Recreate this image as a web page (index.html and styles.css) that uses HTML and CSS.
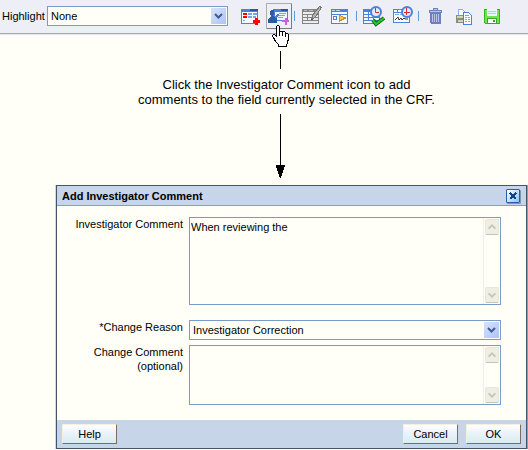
FILE: index.html
```html
<!DOCTYPE html>
<html lang="en">
<head>
    <meta charset="UTF-8">
    <meta name="viewport" content="width=device-width, initial-scale=1.0">
    <title>Add Investigator Comment</title>
    <link rel="stylesheet" href="styles.css">
</head>
<body>
    <div class="toolbar">
        <label for="highlight">Highlight</label>
        <div class="select-box highlight-box">
            <select id="highlight">
                <option>None</option>
            </select>
            <svg class="select-arrow" viewBox="0 0 15 16"><path d="M4 6l3.500 3.500L11 6"/></svg>
        </div>

        <button class="tool" type="button" aria-label="Add entry">
            <svg viewBox="0 0 26 26">
                <path fill="#4a82da" d="M3 6h17v15H3z"/>
                <path fill="#2456ad" d="M12 6h8v2h-8z"/>
                <path fill="#f4f9ff" d="M4 9h15v11H4z"/>
                <path fill="#f00" d="M5 10h4v2H5zM5 13h4v2H5z"/>
                <path fill="#79a5e8" d="M10 10h4v2h-4zM15 10h4v2h-4zM10 13h4v2h-4zM15 13h3v2h-3zM5 17h2v1H5z"/>
                <path fill="#f00" d="M17 15h3v2h2v3h-2v2h-3v-2h-2v-3h2z"/>
            </svg>
        </button>
        <button class="tool active" type="button" aria-label="Investigator Comment">
            <svg viewBox="0 0 26 26">
                <path fill="#4a82da" d="M7 6h15v12H7z"/>
                <path fill="#2456ad" d="M15 6h7v2h-7z"/>
                <path fill="#eef5ff" d="M9 9h12v8H9z"/>
                <path fill="#79a5e8" d="M13 10h7v1h-7zM12 12h7v1h-7zM12 14h5v1h-5z"/>
                <path fill="#2c5c9e" d="M4 8l1-1h2l1 1v3l-1 2 4 2v5H2v-4l3-3-1-2z"/>
                <path fill="#4a82c8" d="M8 14l4-3 1 1-3 4z"/>
                <path fill="#c65fe0" d="M19 15h2v2h2v2h-2v3h-2v-3h-3v-2h3z"/>
            </svg>
        </button>
        <span class="separator"></span>
        <button class="tool" type="button" aria-label="Edit">
            <svg viewBox="0 0 26 26">
                <path fill="#858585" d="M2 6h17v15H2z"/>
                <path fill="#ececec" d="M3 9h15v2H3zM3 12h4v2H3zM8 12h10v2H8zM3 15h4v2H3zM8 15h10v2H8zM3 18h15v2H3z"/>
                <path fill="#bdbdbd" d="M4 7h3v1H4zM9 7h4v1H9z"/>
                <path fill="#b5b5ae" stroke="#777" d="M19.500 3.500l2 1-6.500 10-3.500 2 1-4z"/>
                <path fill="#555" d="M11 16h2v1h-2z"/>
            </svg>
        </button>
        <button class="tool" type="button" aria-label="Run form">
            <svg viewBox="0 0 26 26">
                <path fill="#4a82da" d="M3 6h17v15H3z"/>
                <path fill="#f4f9ff" d="M4 9h15v2H4zM4 12h15v8H4z"/>
                <path fill="#b9d3f7" d="M4 7h3v1H4zM8 7h4v1H8z"/>
                <path fill="none" stroke="#4a82da" d="M5.500 13.500h3v3h-3z"/>
                <path fill="#ffc83c" stroke="#c98d2e" d="M11.500 12.500l6 2.500-6 3z"/>
            </svg>
        </button>
        <span class="separator"></span>
        <button class="tool" type="button" aria-label="Check date">
            <svg viewBox="0 0 26 26">
                <path fill="#4a82da" d="M1 6h17v15H1z"/>
                <path fill="#f4f9ff" d="M2 9h4v2H2zM7 9h4v2H7zM2 12h4v2H2zM7 12h4v2H7zM2 15h4v2H2zM7 15h4v2H7zM2 18h15v2H2zM12 15h5v2h-5z"/>
                <g class="round">
                    <circle cx="14" cy="9" r="5" fill="#dcecff" stroke="#4a82da" stroke-width="2"/>
                    <path fill="none" stroke="#d03030" d="M13.500 5v4.500h3.500"/>
                    <path fill="none" stroke="#0a6b12" stroke-width="4" d="M11 17l3 4 8-6"/>
                    <path fill="none" stroke="#2cc636" stroke-width="2" d="M11 17l3 4 8-6"/>
                </g>
            </svg>
        </button>
        <button class="tool" type="button" aria-label="Sign">
            <svg viewBox="0 0 26 26">
                <path fill="#4a82da" d="M3 6h17v14H3z"/>
                <path fill="#f8fbff" d="M4 7h3v2H4zM8 7h4v2H8zM4 10h15v9H4z"/>
                <path fill="#79a5e8" d="M5 11h4v1H5zM10 11h2v1h-2z"/>
                <g class="round">
                    <path fill="none" stroke="#333" d="M5 17l3-3 1 3 2-2 1 2 2-2 1 1h3"/>
                    <circle cx="17" cy="9" r="5" fill="#dcecff" stroke="#4a82da" stroke-width="2"/>
                    <path fill="none" stroke="#d03030" d="M16.500 5v7M14 9.500h6"/>
                </g>
            </svg>
        </button>
        <span class="separator"></span>
        <button class="tool" type="button" aria-label="Delete">
            <svg viewBox="0 0 26 26">
                <path fill="#6c80bd" d="M9 5h5v2h4v3h-1v10l-1 1H7l-1-1V10H5V7h4z"/>
                <path fill="#b9c6e8" d="M10 6h3v1h-3zM6 8h11v1H6zM8 11h1v8H8zM10 11h1v8h-1zM12 11h1v8h-1zM14 11h1v8h-1z"/>
            </svg>
        </button>
        <button class="tool" type="button" aria-label="Print">
            <svg viewBox="0 0 26 26">
                <path fill="#fff" stroke="#86b0ea" d="M6.500 12.500v-6h4l2 2v4z"/>
                <path fill="#8c8c80" d="M4 12h9v8H4z"/>
                <path fill="#d5d3bd" d="M5 13h7v2H5zM6 17h5v2H6z"/>
                <path fill="#fff" stroke="#4a82da" d="M11.500 9.500h5l3 3v9h-8z"/>
                <path fill="#79a5e8" d="M13 12h4v1h-4zM13 14h2v1h-2zM16 14h2v1h-2zM13 16h2v1h-2zM16 16h2v1h-2zM13 18h2v1h-2zM16 18h2v1h-2z"/>
            </svg>
        </button>
        <button class="tool" type="button" aria-label="Save">
            <svg viewBox="0 0 26 26">
                <path fill="#35b526" d="M4 6h16v15H5l-1-1z"/>
                <path fill="#74e24d" d="M5 7h14v13H5z"/>
                <path fill="#e7f6ff" d="M7 6h10v7H7z"/>
                <path fill="#a8d2ee" d="M8 8h8v1H8zM8 10h8v1H8z"/>
                <path fill="#35a52c" d="M7 15h10v6H7z"/>
                <path fill="#fff" d="M8 16h8v4H8z"/>
                <path fill="#35a52c" d="M13 17h2v2h-2z"/>
            </svg>
        </button>

        <svg class="hand" viewBox="0 0 18 23">
            <path fill="#fff" stroke="#000" d="M5.500 12.500v-10l1-1h1l1 1v6l1-1h2v1l1-1h1l1 1v1h2l1 1v5l-1 2v2l-1 1v2h-8v-2l-3-3-2-4-1-1v-1l1-1h1z"/>
            <path fill="none" stroke="#000" d="M8.500 8v4M11.500 9v3M14.500 10v3"/>
        </svg>
    </div>

    <div class="callout">
        <svg class="line" viewBox="0 0 9 18"><path d="M4 0h1v18H4z"/></svg>
        <p>Click the Investigator Comment icon to add<br>comments to the field currently selected in the CRF.</p>
        <svg class="arrow" viewBox="0 0 9 64"><path d="M4 0h1v51H4zM0 51h9v1L5 64H4L0 52z"/></svg>
    </div>

    <form class="dialog">
        <div class="dialog-title">
            <h1>Add Investigator Comment</h1>
            <button class="close" type="button" aria-label="Close">
                <svg viewBox="0 0 10 10"><path d="M2 2l6 6M8 2L2 8"/></svg>
            </button>
        </div>

        <div class="dialog-body">
            <label for="comment">Investigator Comment</label>
            <div class="text-box tall">
                <textarea id="comment">When reviewing the</textarea>
                <div class="scrollbar">
                    <svg viewBox="0 0 14 16"><path d="M3 10l4-4 4 4"/></svg>
                    <svg viewBox="0 0 14 16"><path d="M3 6l4 4 4-4"/></svg>
                </div>
            </div>

            <label for="reason">*Change Reason</label>
            <div class="select-box">
                <select id="reason">
                    <option>Investigator Correction</option>
                </select>
                <svg class="select-arrow" viewBox="0 0 15 16"><path d="M4 6l3.500 3.500L11 6"/></svg>
            </div>

            <label for="changeComment">Change Comment<br>(optional)</label>
            <div class="text-box">
                <textarea id="changeComment"></textarea>
                <div class="scrollbar">
                    <svg viewBox="0 0 14 16"><path d="M3 10l4-4 4 4"/></svg>
                    <svg viewBox="0 0 14 16"><path d="M3 6l4 4 4-4"/></svg>
                </div>
            </div>
        </div>

        <div class="dialog-footer">
            <button class="help" type="button">Help</button>
            <button type="button">Cancel</button>
            <button type="button">OK</button>
        </div>
    </form>
</body>
</html>
```
FILE: styles.css
```css
:root {
    --page: #fffff7;
    --toolbar: #eeeef7;
    --panel: #c6d5e7;
    --field-border: #7b9ac6;
    --frame: #42556b;
}

* {
    box-sizing: border-box;
    margin: 0;
    padding: 0;
}

body {
    background-color: var(--page);
    color: #000;
    font-family: "Liberation Sans", Arial, sans-serif;
    font-size: 11px;
    line-height: 14px;
}

button,
select,
textarea {
    font: inherit;
    color: inherit;
}

svg {
    display: block;
    shape-rendering: crispEdges;
}

.round {
    shape-rendering: auto;
}

/* toolbar */
.toolbar {
    position: relative;
    display: flex;
    align-items: center;
    gap: 2px;
    height: 34px;
    padding: 0 2px 1px;
    background-color: var(--toolbar);
    border-bottom: 1px solid #a5a5c6;
    box-shadow: 0 1px #e7e7e7;
}

.toolbar label {
    width: 43px;
}

.highlight-box {
    width: 181px;
    margin-right: 8px;
}

.tool {
    flex: none;
    width: 26px;
    height: 26px;
    background: none;
    border: none;
}

.tool svg {
    width: 26px;
    height: 26px;
}

.tool.active {
    box-shadow: inset 1px 1px #adadad, inset -1px -1px #7b7b7b;
}

.separator {
    width: 1px;
    height: 10px;
    margin-right: 3px;
    background-color: #5a9ad6;
}

.hand {
    position: absolute;
    left: 271px;
    top: 24px;
    width: 18px;
    height: 23px;
}

/* callout */
.callout {
    padding: 17px 0 7px 138px;
    font-size: 13px;
    line-height: 15px;
}

.callout p {
    width: max-content;
    padding: 8px 0 7px;
    text-align: center;
}

.line,
.arrow {
    width: 9px;
    margin-left: 138px;
}

.line {
    height: 18px;
}

.arrow {
    height: 64px;
}

/* fields */
.select-box {
    position: relative;
}

.select-box select {
    display: block;
    width: 100%;
    height: 20px;
    padding: 0 20px 0 3px;
    appearance: none;
    background-color: var(--page);
    border: 1px solid var(--field-border);
    border-radius: 0;
}

.select-arrow {
    position: absolute;
    top: 2px;
    right: 2px;
    width: 15px;
    height: 16px;
    background: linear-gradient(135deg, #d6e3ff, #adc3f7);
    pointer-events: none;
}

.select-arrow path,
.scrollbar path {
    fill: none;
    stroke: #425a8c;
    stroke-width: 2;
    shape-rendering: auto;
}

.text-box {
    display: flex;
    height: 60px;
    border: 1px solid var(--field-border);
}

.text-box.tall {
    height: 88px;
    margin-bottom: 10px;
}

.text-box textarea {
    flex: 1;
    min-width: 0;
    padding: 2px 1px;
    resize: none;
    overflow: hidden;
    background: none;
    border: none;
    outline: none;
}

.scrollbar {
    display: flex;
    flex-direction: column;
    justify-content: space-between;
    width: 17px;
    padding: 1px;
    border-left: 1px solid #eeeeef;
}

.scrollbar svg {
    width: 14px;
    height: 16px;
    background-color: #eeeee6;
    border: 1px solid #e7e7d6;
    border-bottom-color: #c6c6ad;
    border-radius: 2px;
}

.scrollbar path {
    stroke: #c6c6b5;
}

/* dialog */
.dialog {
    margin: 0 1px 0 56px;
    border: 1px solid var(--frame);
    box-shadow: 1px 0 #9c9c9c, -1px 0 #d6d6d6;
}

.dialog-title {
    display: flex;
    align-items: center;
    justify-content: space-between;
    height: 20px;
    padding: 0 6px 0 5px;
    background-color: var(--panel);
    border-bottom: 1px solid #8c9eb5;
}

.dialog-title h1 {
    font-size: 11px;
}

.close {
    width: 14px;
    height: 14px;
    padding: 1px;
    background: linear-gradient(135deg, #fff, #8cc3ef);
    border: 1px solid #2461ad;
    border-radius: 1px;
    box-shadow: 1px 1px #8494ad;
}

.close svg {
    width: 10px;
    height: 10px;
}

.close path {
    fill: none;
    stroke: #104584;
    stroke-width: 2;
}

.dialog-body {
    display: grid;
    grid-template-columns: 126px 1fr;
    gap: 5px 6px;
    padding: 11px 25px 15px 0;
}

.dialog-body label {
    text-align: right;
}

.dialog-footer {
    display: flex;
    gap: 8px;
    padding: 4px 5px;
    background-color: var(--panel);
}

.dialog-footer button {
    width: 55px;
    height: 20px;
    background: linear-gradient(#fff, #eef3fb 40%, #d6eef0);
    border: 1px solid #f7efde;
    border-right-color: #7b6d63;
    border-bottom-color: #7b6d63;
}

.dialog-footer .help {
    margin-right: auto;
}
```
